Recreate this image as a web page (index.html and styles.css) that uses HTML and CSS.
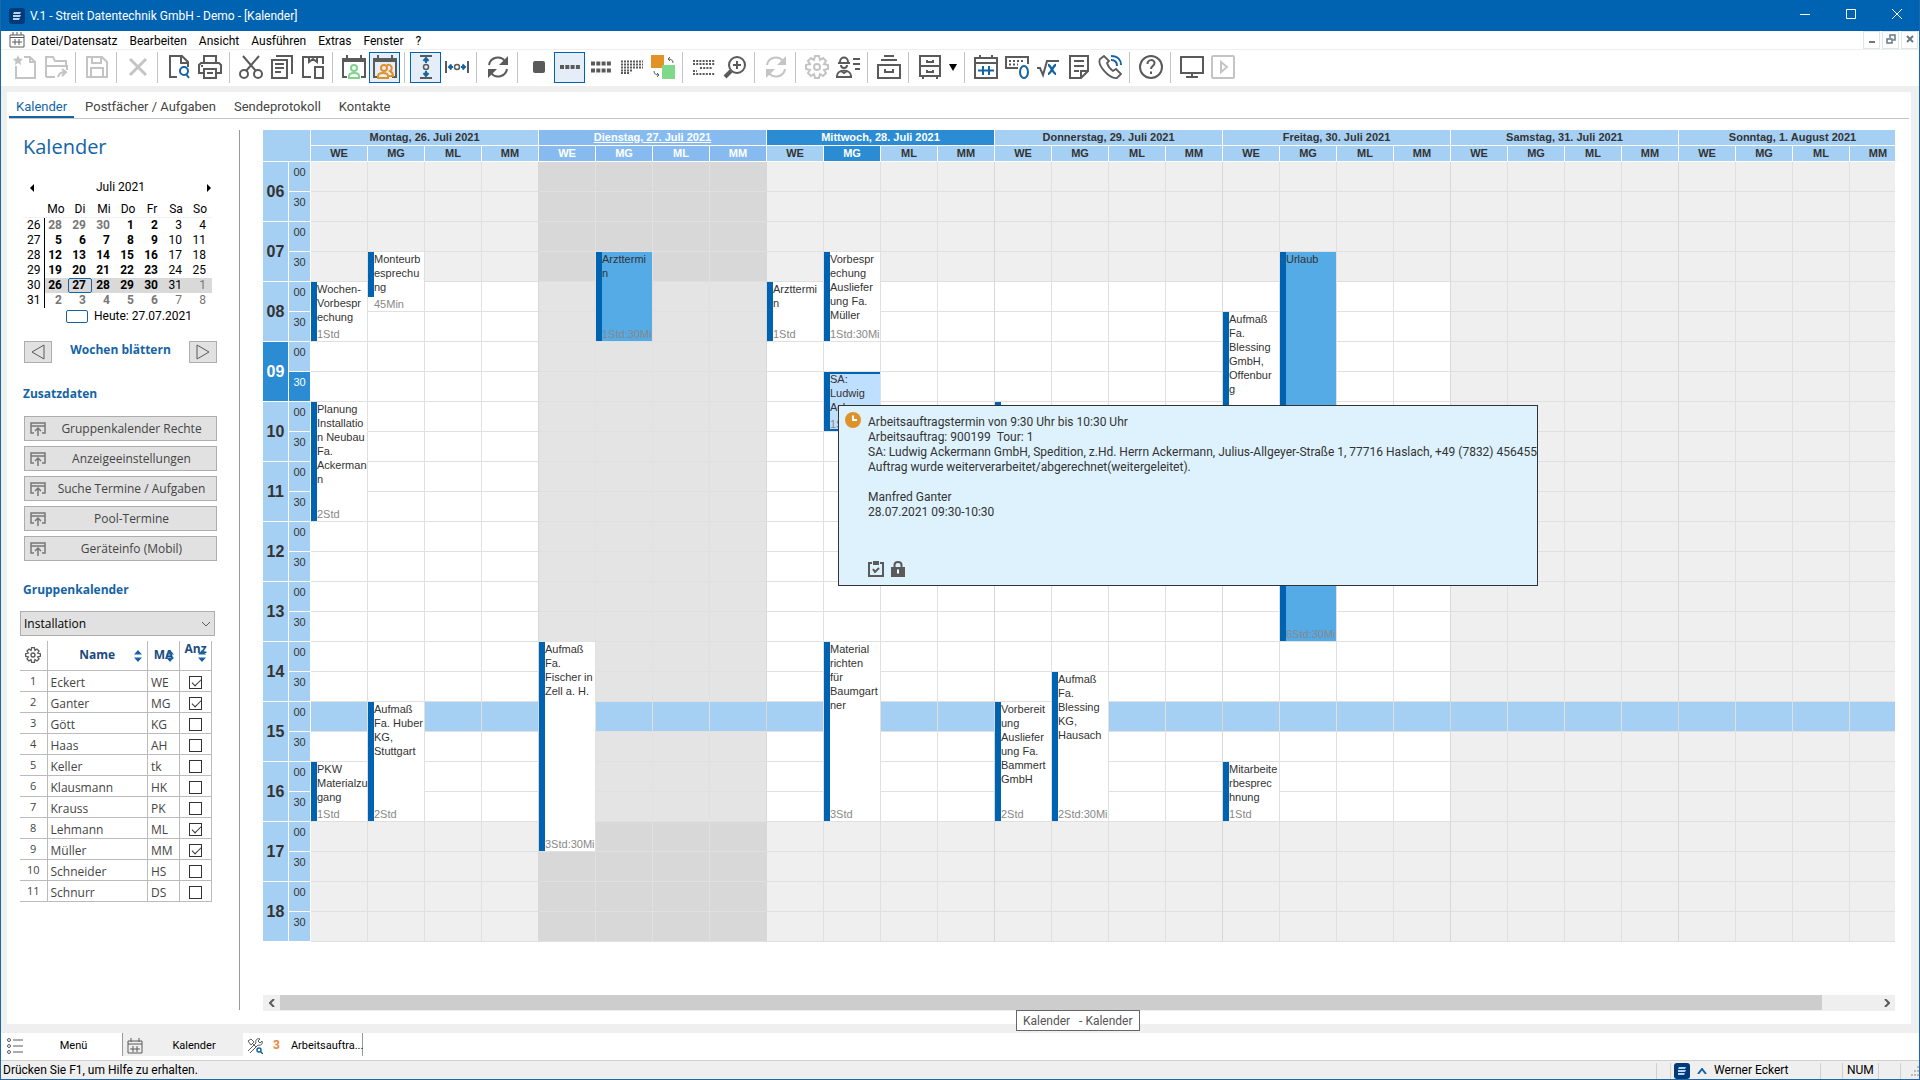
FILE: index.html
```html
<!DOCTYPE html>
<html lang="de">
<head>
  <meta charset="UTF-8" />
  <title>V.1 - Streit Datentechnik GmbH - Demo - [Kalender]</title>
  <link rel="stylesheet" href="styles.css">
</head>
<body>

  <header class="titlebar">
    <svg class="logo" viewBox="0 0 16 16"><rect width="16" height="16" rx="3" fill="#003a78"/><path d="M5 4h7l-1 2H4zM4 7h8l-1 2H4zM4 10h7l-1 2H4z" fill="#b9d3ee"/></svg>
    <span class="title">V.1 - Streit Datentechnik GmbH - Demo - [Kalender]</span>
    <div class="window-buttons">
      <button aria-label="Minimieren"><svg viewBox="0 0 10 10"><path d="M0 5.500h10"/></svg></button>
      <button aria-label="Maximieren"><svg viewBox="0 0 10 10"><path d="M.5.5h9v9h-9z"/></svg></button>
      <button aria-label="Schließen"><svg viewBox="0 0 10 10"><path d="M0 0l10 10M10 0L0 10"/></svg></button>
    </div>
  </header>

  <nav class="menubar">
    <svg class="menu-icon" viewBox="0 0 16 16"><path d="M1 3h14v12H1zM1 5.500h14M4 0v3M8 0v3M12 0v3M6 7v6M10 7v6M3 10h10"/></svg>
    <a href="#">Datei/Datensatz</a>
    <a href="#">Bearbeiten</a>
    <a href="#">Ansicht</a>
    <a href="#">Ausführen</a>
    <a href="#">Extras</a>
    <a href="#">Fenster</a>
    <a href="#">?</a>
    <div class="mdi-buttons">
      <button aria-label="Minimieren"><svg viewBox="0 0 10 10"><path d="M2 8h6"/></svg></button>
      <button aria-label="Wiederherstellen"><svg viewBox="0 0 10 10"><path d="M1 5h5v4H1zM4 4V1h5v5H7" stroke-width="1.500"/></svg></button>
      <button aria-label="Schließen"><svg viewBox="0 0 10 10"><path d="M2 2l6 6M8 2L2 8"/></svg></button>
    </div>
  </nav>

  <div class="toolbar">
    <button class="off" aria-label="Neu"><svg viewBox="0 0 24 24"><path d="M11 2h6l5 5v16H3V11M17 2v5h5"/><path d="M5 0l1.500 3.500L10 4 7.500 6.500 8 10 5 8 2 10l.5-3.500L0 4l3.500-.5z" fill="#c4c4c4" stroke="none"/></svg></button>
    <button class="off" aria-label="Öffnen"><svg viewBox="0 0 24 24"><path d="M2 22V2h7l2 4h11v4M2 22V11h21v4M2 22h9M14 22c1-4 4-5 7-5M18 14l4 3-4 4"/></svg></button>
    <i></i>
    <button class="off" aria-label="Speichern"><svg viewBox="0 0 24 24"><path d="M2 2h15l5 5v15H2zM7 2v6h9V2M6 22v-9h12v9"/></svg></button>
    <i></i>
    <button class="off" aria-label="Löschen"><svg viewBox="0 0 24 24"><path d="M4 4l16 16M20 4L4 20" stroke-width="3"/></svg></button>
    <i></i>
    <button aria-label="Vorschau"><svg viewBox="0 0 24 24"><path d="M10 22H3V1h12l6 6v5M14 1v7h7"/><g stroke="#1464a5"><circle cx="17" cy="16" r="4"/><path d="M19 19l3 4"/></g></svg></button>
    <button aria-label="Drucken"><svg viewBox="0 0 24 24"><path d="M6 8V1h12v7M6 18H1V10l2-2h18l2 2v8h-5M6 14h12v9H6zM3 11h2M9 18h6"/></svg></button>
    <i></i>
    <button aria-label="Ausschneiden"><svg viewBox="0 0 24 24"><circle cx="5" cy="19" r="4"/><circle cx="19" cy="19" r="4"/><path d="M4 1l13 15M20 1L7 16"/></svg></button>
    <button aria-label="Kopieren"><svg viewBox="0 0 24 24"><path d="M2 5h15v18H2zM6 1h16v18M5 9h9M5 13h9M5 17h6"/></svg></button>
    <button aria-label="Einfügen"><svg viewBox="0 0 24 24"><path d="M10 22H2V2h20v7M8 1v6l4-3 4 3V1M14 12h8v11h-8z"/></svg></button>
    <i></i>
    <button aria-label="Einzelkalender"><svg viewBox="0 0 24 24"><path d="M0 5h24" stroke-width="4"/><path d="M5 0v4M19 0v4M1 4v18h4M19 22h4V4"/><g stroke="#7fd18c"><circle cx="12" cy="13" r="3"/><path d="M7 23v-2c0-4 10-4 10 0v2z"/></g></svg></button>
    <button class="on" aria-label="Gruppenkalender"><svg viewBox="0 0 24 24"><path d="M0 5h24" stroke-width="4"/><path d="M5 0v4M19 0v4M1 4v18h4M19 22h4V4"/><g stroke="#e0922a"><circle cx="11" cy="13" r="3"/><path d="M5 23v-2c0-4 10-4 10 0v2zM14 10c5-1 6 4 3 6 2 1 3 2 3 5h-4"/></g></svg></button>
    <i></i>
    <button class="on" aria-label="Höhe anpassen"><svg viewBox="0 0 24 24"><path d="M6 1h12M6 23h12"/><circle cx="12" cy="12" r="2.500" stroke-width="1.500"/><path d="M12 8V3M9.500 6L12 3l2.500 3M12 16v5M9.500 18l2.500 3 2.500-3" stroke="#1464a5"/></svg></button>
    <button aria-label="Breite anpassen"><svg viewBox="0 0 24 24"><path d="M1 6v12M23 6v12"/><circle cx="12" cy="12" r="2.500" stroke-width="1.500"/><path d="M8 12H4M6.500 9.500L4 12l2.500 2.500M16 12h4M17.500 9.500L20 12l-2.500 2.500" stroke="#1464a5"/></svg></button>
    <i></i>
    <button aria-label="Aktualisieren"><svg viewBox="0 0 24 24"><path d="M3 10a9 9 0 0 1 16-4M21 14a9 9 0 0 1-16 4"/><path d="M22 1v9h-9zM2 23v-9h9z" fill="#5a5a5a" stroke="none"/></svg></button>
    <i></i>
    <button aria-label="Tag"><svg viewBox="0 0 24 24"><rect x="6" y="6" width="12" height="12" rx="2" fill="#5a5a5a" stroke="none"/></svg></button>
    <button class="on" aria-label="Woche"><svg viewBox="0 0 24 24"><path d="M2 12h20" stroke-width="4" stroke-dasharray="4 1.300"/></svg></button>
    <button aria-label="Zwei Wochen"><svg viewBox="0 0 24 24"><path d="M2 8.500h20M2 15.500h20" stroke-width="4" stroke-dasharray="4 1.300"/></svg></button>
    <button aria-label="Monat"><svg viewBox="0 0 24 24"><path d="M1 6.500h22M1 9.500h22M1 12.500h22M1 15.500h11M1 18h8" stroke-dasharray="2 1"/></svg></button>
    <button aria-label="Farben tauschen"><svg viewBox="0 0 24 24"><path d="M0 0h13v13H0z" fill="#e39225" stroke="none"/><path d="M11 10h13v14H11z" fill="#7fd98a" stroke="none"/><path d="M22 8c0-3-2-4-5-4M19 2l-2 2 2 2M3 16c0 3 2 4 5 4M6 18l2 2-2 2" stroke-width="1"/></svg></button>
    <i></i>
    <button aria-label="Zeitleiste"><svg viewBox="0 0 24 24"><path d="M1 6h22M1 9h22M8 13h12M1 16h4M1 19h22" stroke-dasharray="2 1.200"/></svg></button>
    <button aria-label="Zoom"><svg viewBox="0 0 24 24"><circle cx="14" cy="10" r="8"/><path d="M14 6v8M10 10h8"/><path d="M8 16l-6 6" stroke-width="4"/></svg></button>
    <i></i>
    <button class="off" aria-label="Synchronisieren"><svg viewBox="0 0 24 24"><path d="M3 10a9 9 0 0 1 16-4M21 14a9 9 0 0 1-16 4"/><path d="M22 1v9h-9zM2 23v-9h9z" fill="#c4c4c4" stroke="none"/></svg></button>
    <i></i>
    <button class="off" aria-label="Einstellungen"><svg viewBox="0 0 24 24"><path d="M10 1h4l1 4 3-2 3 3-2 3 4 1v4l-4 1 2 3-3 3-3-2-1 4h-4l-1-4-3 2-3-3 2-3-4-1v-4l4-1-2-3 3-3 3 2z"/><circle cx="12" cy="12" r="3"/></svg></button>
    <button aria-label="Mitarbeiter"><svg viewBox="0 0 24 24"><path d="M2 8h12M4 7c0-6 8-6 8 0M5 10c0 4 6 4 6 0M1 21c0-7 14-7 14 0v1H1zM5 16l3 2 3-2M17 4h7M17 9h7M19 14h5"/></svg></button>
    <i></i>
    <button aria-label="Archiv"><svg viewBox="0 0 24 24"><path d="M7 1h10M4 5h16M1 10h22v13H1zM8 14v3h8v-3"/></svg></button>
    <i></i>
    <button aria-label="Ablage"><svg viewBox="0 0 24 24"><path d="M2 1h20v20H2zM2 11h20M9 5v2h6V5M9 15v2h6v-2M5 21v3M19 21v3"/></svg></button>
    <button class="arrow" aria-label="Mehr"><svg viewBox="0 0 8 8"><path d="M0 1h8L4 8z"/></svg></button>
    <i></i>
    <button aria-label="Kalender"><svg viewBox="0 0 24 24"><path d="M1 3h22v20H1zM1 8h22M6 0v4M18 0v4"/><path d="M9 11v9M15 11v9M4 15.500h16" stroke="#1464a5"/></svg></button>
    <button aria-label="Nummernblock"><svg viewBox="0 0 24 24"><path d="M13 13H1V2h22v7"/><path d="M4 6h16M4 9.500h9" stroke-dasharray="2 2"/><ellipse cx="19" cy="17" rx="4" ry="6" stroke="#1464a5"/></svg></button>
    <button aria-label="Formel"><svg viewBox="0 0 24 24"><path d="M1 13h3l3 7L11 6h12"/><path d="M12 10c3 0 5 9 8 9M20 10c-3 0-5 9-8 9" stroke="#1464a5" stroke-width="2.500"/></svg></button>
    <button aria-label="Notiz"><svg viewBox="0 0 24 24"><path d="M14 23H3V1h18v15zM14 23v-7h7M7 6h10M7 11h10M7 16h5"/></svg></button>
    <button aria-label="Telefon"><svg viewBox="0 0 24 24"><path d="M6 1L2 4c-3 6 9 20 17 19l4-4-5-5-3 2c-3-2-5-5-6-8l2-2z" stroke-width="1.800"/><path d="M13 5c4 0 6 2 6 6M13 1c7 0 10 4 10 9" stroke="#1464a5"/></svg></button>
    <i></i>
    <button aria-label="Hilfe"><svg viewBox="0 0 24 24"><circle cx="12" cy="12" r="11"/><path d="M8.500 9c0-5 7-5 7-1 0 3-3.500 3-3.500 6M12 16.500v2.500"/></svg></button>
    <i></i>
    <button aria-label="Bildschirm"><svg viewBox="0 0 24 24"><path d="M1 2h22v16H1zM12 18v4M6 22h12"/></svg></button>
    <button class="off" aria-label="Abspielen"><svg viewBox="0 0 24 24"><rect x="1" y="1" width="22" height="22" rx="1"/><path d="M10 7l6 5-6 5z"/></svg></button>
  </div>

  <main class="panel">
    <nav class="tabs">
      <a href="#" class="active">Kalender</a>
      <a href="#">Postfächer / Aufgaben</a>
      <a href="#">Sendeprotokoll</a>
      <a href="#">Kontakte</a>
    </nav>

    <div class="content">
      <aside class="sidebar">
        <h1>Kalender</h1>

        <div class="month-nav">
          <button aria-label="Vorheriger Monat"><svg viewBox="0 0 4 8"><path d="M4 0v8L0 4z"/></svg></button>
          <span>Juli 2021</span>
          <button aria-label="Nächster Monat"><svg viewBox="0 0 4 8"><path d="M0 0v8l4-4z"/></svg></button>
        </div>
        <table class="month">
          <thead>
            <tr><th></th><th>Mo</th><th>Di</th><th>Mi</th><th>Do</th><th>Fr</th><th>Sa</th><th>So</th></tr>
          </thead>
          <tbody>
            <tr><th>26</th><td class="out">28</td><td class="out">29</td><td class="out">30</td><td>1</td><td>2</td><td>3</td><td>4</td></tr>
            <tr><th>27</th><td>5</td><td>6</td><td>7</td><td>8</td><td>9</td><td>10</td><td>11</td></tr>
            <tr><th>28</th><td>12</td><td>13</td><td>14</td><td>15</td><td>16</td><td>17</td><td>18</td></tr>
            <tr><th>29</th><td>19</td><td>20</td><td>21</td><td>22</td><td>23</td><td>24</td><td>25</td></tr>
            <tr class="current"><th>30</th><td>26</td><td class="today">27</td><td>28</td><td>29</td><td>30</td><td>31</td><td class="out">1</td></tr>
            <tr><th>31</th><td class="out">2</td><td class="out">3</td><td class="out">4</td><td class="out">5</td><td class="out">6</td><td class="out">7</td><td class="out">8</td></tr>
          </tbody>
        </table>
        <div class="today-line"><span class="today-box"></span>Heute: 27.07.2021</div>

        <div class="weeks">
          <button aria-label="Woche zurück"><svg viewBox="0 0 14 16"><path d="M13 1v14L1 8z"/></svg></button>
          <h2>Wochen blättern</h2>
          <button aria-label="Woche vor"><svg viewBox="0 0 14 16"><path d="M1 1v14l12-7z"/></svg></button>
        </div>

        <h2>Zusatzdaten</h2>
        <div class="extras">
          <button><svg viewBox="0 0 16 14"><path d="M4 11H1V1h14v10h-3M1 4h14M8 14V6M5 9l3-3 3 3"/></svg><span>Gruppenkalender Rechte</span></button>
          <button><svg viewBox="0 0 16 14"><path d="M4 11H1V1h14v10h-3M1 4h14M8 14V6M5 9l3-3 3 3"/></svg><span>Anzeigeeinstellungen</span></button>
          <button><svg viewBox="0 0 16 14"><path d="M4 11H1V1h14v10h-3M1 4h14M8 14V6M5 9l3-3 3 3"/></svg><span>Suche Termine / Aufgaben</span></button>
          <button><svg viewBox="0 0 16 14"><path d="M4 11H1V1h14v10h-3M1 4h14M8 14V6M5 9l3-3 3 3"/></svg><span>Pool-Termine</span></button>
          <button><svg viewBox="0 0 16 14"><path d="M4 11H1V1h14v10h-3M1 4h14M8 14V6M5 9l3-3 3 3"/></svg><span>Geräteinfo (Mobil)</span></button>
        </div>

        <h2><label for="group">Gruppenkalender</label></h2>
        <div class="group-select">
          <select id="group">
            <option selected>Installation</option>
            <option>Verwaltung</option>
          </select>
          <svg viewBox="0 0 10 6"><path d="M1 1l4 4 4-4"/></svg>
        </div>

        <table class="members">
          <thead>
            <tr>
              <th><svg class="gear" viewBox="0 0 24 24"><path d="M10 1h4l1 4 3-2 3 3-2 3 4 1v4l-4 1 2 3-3 3-3-2-1 4h-4l-1-4-3 2-3-3 2-3-4-1v-4l4-1-2-3 3-3 3 2z"/><circle cx="12" cy="12" r="3"/></svg></th>
              <th>Name<svg class="sort" viewBox="0 0 8 12"><path d="M0 4.500L4 0l4 4.500zM0 7.500L4 12l4-4.500z"/></svg></th>
              <th>MA<svg class="sort" viewBox="0 0 8 12"><path d="M0 4.500L4 0l4 4.500zM0 7.500L4 12l4-4.500z"/></svg></th>
              <th class="high">Anz<svg class="sort" viewBox="0 0 8 12"><path d="M0 4.500L4 0l4 4.500zM0 7.500L4 12l4-4.500z"/></svg></th>
            </tr>
          </thead>
          <tbody>
            <tr><td>1</td><td>Eckert</td><td>WE</td><td><input type="checkbox" aria-label="Eckert" checked></td></tr>
            <tr><td>2</td><td>Ganter</td><td>MG</td><td><input type="checkbox" aria-label="Ganter" checked></td></tr>
            <tr><td>3</td><td>Gött</td><td>KG</td><td><input type="checkbox" aria-label="Gött"></td></tr>
            <tr><td>4</td><td>Haas</td><td>AH</td><td><input type="checkbox" aria-label="Haas"></td></tr>
            <tr><td>5</td><td>Keller</td><td>tk</td><td><input type="checkbox" aria-label="Keller"></td></tr>
            <tr><td>6</td><td>Klausmann</td><td>HK</td><td><input type="checkbox" aria-label="Klausmann"></td></tr>
            <tr><td>7</td><td>Krauss</td><td>PK</td><td><input type="checkbox" aria-label="Krauss"></td></tr>
            <tr><td>8</td><td>Lehmann</td><td>ML</td><td><input type="checkbox" aria-label="Lehmann" checked></td></tr>
            <tr><td>9</td><td>Müller</td><td>MM</td><td><input type="checkbox" aria-label="Müller" checked></td></tr>
            <tr><td>10</td><td>Schneider</td><td>HS</td><td><input type="checkbox" aria-label="Schneider"></td></tr>
            <tr><td>11</td><td>Schnurr</td><td>DS</td><td><input type="checkbox" aria-label="Schnurr"></td></tr>
          </tbody>
        </table>
      </aside>

      <section class="calendar">
        <div class="sheet">
          <div class="times">
            <div class="corner"></div>
            <div class="hour"><b>06</b><span>00</span><span>30</span></div>
            <div class="hour"><b>07</b><span>00</span><span>30</span></div>
            <div class="hour"><b>08</b><span>00</span><span>30</span></div>
            <div class="hour now"><b>09</b><span>00</span><span>30</span></div>
            <div class="hour"><b>10</b><span>00</span><span>30</span></div>
            <div class="hour"><b>11</b><span>00</span><span>30</span></div>
            <div class="hour"><b>12</b><span>00</span><span>30</span></div>
            <div class="hour"><b>13</b><span>00</span><span>30</span></div>
            <div class="hour"><b>14</b><span>00</span><span>30</span></div>
            <div class="hour"><b>15</b><span>00</span><span>30</span></div>
            <div class="hour"><b>16</b><span>00</span><span>30</span></div>
            <div class="hour"><b>17</b><span>00</span><span>30</span></div>
            <div class="hour"><b>18</b><span>00</span><span>30</span></div>
          </div>

          <!-- --from = half-hour slot (1 = 06:00), --slots = length in half hours -->
          <div class="day">
            <h3>Montag, 26. Juli 2021</h3>
            <h4>WE</h4><h4>MG</h4><h4>ML</h4><h4>MM</h4>
            <div class="col">
              <div class="event" style="--from:5;--slots:2">Wochen-<br>Vorbespr<br>echung<small>1Std</small></div>
              <div class="event" style="--from:9;--slots:4">Planung<br>Installatio<br>n Neubau<br>Fa.<br>Ackerman<br>n<small>2Std</small></div>
              <div class="event" style="--from:21;--slots:2">PKW<br>Materialzu<br>gang<small>1Std</small></div>
            </div>
            <div class="col">
              <div class="event short" style="--from:4;--slots:2">Monteurb<br>esprechu<br>ng<small>45Min</small></div>
              <div class="event" style="--from:19;--slots:4">Aufmaß<br>Fa. Huber<br>KG,<br>Stuttgart<small>2Std</small></div>
            </div>
            <div class="col"></div>
            <div class="col"></div>
          </div>

          <div class="day is-today">
            <h3>Dienstag, 27. Juli 2021</h3>
            <h4>WE</h4><h4>MG</h4><h4>ML</h4><h4>MM</h4>
            <div class="col">
              <div class="event" style="--from:17;--slots:7">Aufmaß<br>Fa.<br>Fischer in<br>Zell a. H.<small>3Std:30Mi</small></div>
            </div>
            <div class="col">
              <div class="event absent" style="--from:4;--slots:3">Arzttermi<br>n<small>1Std:30Mi</small></div>
            </div>
            <div class="col"></div>
            <div class="col"></div>
          </div>

          <div class="day selected">
            <h3>Mittwoch, 28. Juli 2021</h3>
            <h4>WE</h4><h4 class="picked">MG</h4><h4>ML</h4><h4>MM</h4>
            <div class="col">
              <div class="event" style="--from:5;--slots:2">Arzttermi<br>n<small>1Std</small></div>
            </div>
            <div class="col">
              <div class="event" style="--from:4;--slots:3">Vorbespr<br>echung<br>Ausliefer<br>ung Fa.<br>Müller<small>1Std:30Mi</small></div>
              <div class="event order" style="--from:8;--slots:2">SA:<br>Ludwig<br>Acker<small>1Std</small></div>
              <div class="event" style="--from:17;--slots:6">Material<br>richten<br>für<br>Baumgart<br>ner<small>3Std</small></div>
            </div>
            <div class="col"></div>
            <div class="col"></div>
          </div>

          <div class="day">
            <h3>Donnerstag, 29. Juli 2021</h3>
            <h4>WE</h4><h4>MG</h4><h4>ML</h4><h4>MM</h4>
            <div class="col">
              <div class="event" style="--from:9;--slots:2"></div>
              <div class="event" style="--from:19;--slots:4">Vorbereit<br>ung<br>Ausliefer<br>ung Fa.<br>Bammert<br>GmbH<small>2Std</small></div>
            </div>
            <div class="col">
              <div class="event" style="--from:18;--slots:5">Aufmaß<br>Fa.<br>Blessing<br>KG,<br>Hausach<small>2Std:30Mi</small></div>
            </div>
            <div class="col"></div>
            <div class="col"></div>
          </div>

          <div class="day">
            <h3>Freitag, 30. Juli 2021</h3>
            <h4>WE</h4><h4>MG</h4><h4>ML</h4><h4>MM</h4>
            <div class="col">
              <div class="event" style="--from:6;--slots:4">Aufmaß<br>Fa.<br>Blessing<br>GmbH,<br>Offenbur<br>g</div>
              <div class="event" style="--from:21;--slots:2">Mitarbeite<br>rbesprec<br>hnung<small>1Std</small></div>
            </div>
            <div class="col">
              <div class="event absent" style="--from:4;--slots:13">Urlaub<small>6Std:30Mi</small></div>
            </div>
            <div class="col"></div>
            <div class="col"></div>
          </div>

          <div class="day weekend">
            <h3>Samstag, 31. Juli 2021</h3>
            <h4>WE</h4><h4>MG</h4><h4>ML</h4><h4>MM</h4>
            <div class="col"></div><div class="col"></div><div class="col"></div><div class="col"></div>
          </div>

          <div class="day weekend">
            <h3>Sonntag, 1. August 2021</h3>
            <h4>WE</h4><h4>MG</h4><h4>ML</h4><h4>MM</h4>
            <div class="col"></div><div class="col"></div><div class="col"></div><div class="col"></div>
          </div>
        </div>

        <div class="scrollbar">
          <button aria-label="Nach links"><svg viewBox="0 0 6 8"><path d="M5 0L1 4l4 4"/></svg></button>
          <div class="track"><div class="thumb"></div></div>
          <button aria-label="Nach rechts"><svg viewBox="0 0 6 8"><path d="M1 0l4 4-4 4"/></svg></button>
        </div>

        <div class="tooltip">
          <svg class="clock" viewBox="0 0 16 16"><circle cx="8" cy="8" r="8" fill="#e0922a"/><path d="M8 3.500V8h4" fill="none" stroke="#fff" stroke-width="2"/></svg>
          <div>
            <p>Arbeitsauftragstermin von 9:30 Uhr bis 10:30 Uhr</p>
            <p>Arbeitsauftrag: 900199 &nbsp;Tour: 1</p>
            <p>SA: Ludwig Ackermann GmbH, Spedition, z.Hd. Herrn Ackermann, Julius-Allgeyer-Straße 1, 77716 Haslach, +49 (7832) 456455</p>
            <p>Auftrag wurde weiterverarbeitet/abgerechnet(weitergeleitet).</p>
            <p class="person">Manfred Ganter</p>
            <p>28.07.2021 09:30-10:30</p>
            <div class="flags">
              <svg viewBox="0 0 16 16"><path d="M4 2H1v13h14V2h-3M5 8l2 3 4-4" fill="none" stroke="#5a5a5a" stroke-width="2"/><path d="M5 0h6v4H5z" fill="#5a5a5a"/></svg>
              <svg viewBox="0 0 16 16"><path d="M1 6h14v10H1z" fill="#5a5a5a"/><path d="M4.500 6V4c0-4 7-4 7 0v2" fill="none" stroke="#5a5a5a" stroke-width="2"/><path d="M8 8.500v4" stroke="#fff" stroke-width="2"/></svg>
            </div>
          </div>
        </div>
      </section>
    </div>
  </main>

  <div class="tab-hint">Kalender &nbsp; - Kalender</div>

  <nav class="windows">
    <button class="first">
      <svg viewBox="0 0 16 16"><circle cx="2" cy="2" r="1.500"/><circle cx="2" cy="8" r="1.500"/><circle cx="2" cy="14" r="1.500"/><path d="M6 2h10M6 8h10M6 14h10"/></svg>
      <span>Menü</span>
    </button>
    <button class="active">
      <svg viewBox="0 0 16 16"><path d="M1 3h14v12H1zM1 6h14M4 0v4M12 0v4M6 8v6M10 8v6M3 11h10"/></svg>
      <span>Kalender</span>
    </button>
    <button class="last">
      <svg viewBox="0 0 16 16"><path d="M1 13l8-8M3 15l8-8M9 5c-1-3 1-5 4-4l-2 2 2 2 2-2c1 3-1 5-4 4M1 3l3-2 3 3-3 3zM6 6l3 3"/><g stroke="#1464a5" stroke-width="1.500"><circle cx="12" cy="12" r="2"/><path d="M13 13l3 3"/></g></svg>
      <em>3</em>
      <span>Arbeitsauftra...</span>
    </button>
  </nav>

  <footer class="statusbar">
    <span class="hint">Drücken Sie F1, um Hilfe zu erhalten.</span>
    <span class="cell gap"></span>
    <span class="cell user">
      <svg class="logo" viewBox="0 0 16 16"><rect width="16" height="16" rx="3" fill="#003a78"/><path d="M5 4h7l-1 2H4zM4 7h8l-1 2H4zM4 10h7l-1 2H4z" fill="#b9d3ee"/></svg>
      <svg class="up" viewBox="0 0 10 6"><path d="M1 6l4-5 4 5"/></svg>
      Werner Eckert
    </span>
    <span class="cell caps"></span>
    <span class="cell num">NUM</span>
    <span class="cell caps"></span>
    <span class="cell grip"><svg viewBox="0 0 10 10"><path d="M8 1h2M5 5h2M8 5h2M2 9h2M5 9h2M8 9h2"/></svg></span>
  </footer>

</body>
</html>
```

FILE: styles.css
```css
* {
  box-sizing: border-box;
}

body {
  margin: 0;
  min-height: 100vh;
  display: flex;
  flex-direction: column;
  position: relative;
  border: 1px solid #1d66a8;
  border-top: none;
  background: #efefef;
  color: #000;
  font-family: Roboto, "Open Sans", sans-serif;
  font-size: 12px;
  line-height: 15px;
}

button {
  padding: 0;
  border: none;
  background: none;
  color: inherit;
  font: inherit;
}

a {
  color: inherit;
  text-decoration: none;
}

svg {
  flex: none;
  fill: none;
  stroke: #5a5a5a;
}

h1, h2, h3, h4, p {
  margin: 0;
}

.logo {
  width: 16px;
  height: 16px;
  stroke: none;
}

/* title bar */
.titlebar {
  display: flex;
  align-items: center;
  height: 31px;
  margin: 0 -1px;
  padding-left: 9px;
  background: #0063b1;
  color: #fff;
}

.title {
  margin-left: 5px;
  padding-top: 2px;
}

.window-buttons {
  display: flex;
  margin-left: auto;
}

.window-buttons button {
  width: 46px;
  height: 31px;
}

.window-buttons svg {
  width: 10px;
  height: 10px;
  stroke: #fff;
}

/* menu */
.menubar {
  display: flex;
  align-items: center;
  gap: 12px;
  height: 19px;
  padding-left: 8px;
  background: #fff;
  border-bottom: 1px solid #efefef;
}

.menubar a {
  padding-top: 2px;
}

.menu-icon {
  width: 16px;
  height: 16px;
  margin-right: -6px;
}

.mdi-buttons {
  display: flex;
  gap: 2px;
  margin: 0 1px 0 auto;
}

.mdi-buttons button {
  width: 17px;
  height: 18px;
  border: 1px solid #dfe6ea;
}

.mdi-buttons svg {
  width: 10px;
  height: 10px;
  stroke: #667a84;
  stroke-width: 2;
}

/* toolbar */
.toolbar {
  display: flex;
  align-items: center;
  height: 36px;
  padding: 0 0 2px 8px;
  background: #fff;
}

.toolbar button {
  display: flex;
  align-items: center;
  justify-content: center;
  width: 31px;
  height: 31px;
}

.toolbar .on {
  background: #e5eef8;
  border: 1px solid #0063b1;
}

.toolbar svg {
  width: 24px;
  height: 24px;
  stroke-width: 2;
}

.toolbar .off svg {
  stroke: #c4c4c4;
}

.toolbar i {
  width: 1px;
  height: 31px;
  margin: 0 5px 0 4px;
  background: #c4c4c4;
}

.toolbar .arrow {
  width: 15px;
}

.toolbar .arrow svg {
  width: 8px;
  height: 8px;
  fill: #000;
  stroke: none;
}

/* main panel */
.panel {
  flex: 1;
  display: flex;
  flex-direction: column;
  margin: 6px 8px 9px 6px;
  background: #fff;
}

.tabs {
  display: flex;
  gap: 4px;
  margin: 0 2px;
  border-bottom: 1px solid #c4c4c4;
  color: #444;
  font-size: 13px;
}

.tabs a {
  height: 26px;
  padding: 0 7px;
  line-height: 29px;
}

.tabs .active {
  color: #1464a5;
  border-bottom: 2px solid #1464a5;
}

.content {
  flex: 1;
  display: flex;
}

/* sidebar */
.sidebar {
  width: 233px;
  margin: 11px 0 14px;
  padding: 0 21px 0 16px;
  border-right: 1px solid #999;
}

h1 {
  margin-bottom: 16px;
  color: #1464a5;
  font-family: "Open Sans", sans-serif;
  font-size: 20px;
  font-weight: normal;
  line-height: 34px;
}

h2 {
  color: #1464a5;
  font-family: "Open Sans", sans-serif;
  font-size: 12px;
  line-height: 18px;
}

.month-nav {
  display: flex;
  justify-content: space-between;
  padding: 0 7px;
  margin-bottom: 7px;
}

.month-nav svg {
  display: block;
  width: 4px;
  height: 8px;
  fill: #000;
  stroke: none;
}

.month {
  border-collapse: collapse;
}

.month th, .month td {
  width: 24px;
  height: 15px;
  padding: 0 6px 0 0;
  line-height: 15px;
  text-align: right;
}

.month th {
  font-weight: normal;
}

.month thead th {
  padding: 0;
  text-align: center;
  border-bottom: 1px solid #f2f2f2;
}

.month tr th:first-child {
  width: 21px;
}

.month tbody th {
  padding-right: 3px;
  border-right: 1px solid #000;
}

.month td {
  font-weight: bold;
}

.month td:nth-child(n+7) {
  font-weight: normal;
}

.month .out {
  color: #777;
}

.current td {
  background: #d9d9d9;
}

.month .today {
  outline: 1px solid #1464a5;
  outline-offset: -1px;
  border-radius: 2px;
}

.today-line {
  display: flex;
  align-items: center;
  gap: 6px;
  margin: 1px 0 17px 43px;
}

.today-box {
  width: 22px;
  height: 13px;
  border: 1px solid #1464a5;
  border-radius: 2px;
}

.weeks {
  display: flex;
  justify-content: space-between;
  width: 193px;
  margin: 0 0 22px 1px;
}

.weeks button {
  width: 28px;
  height: 22px;
  background: #e1e1e1;
  border: 1px solid #adadad;
}

.weeks svg {
  display: block;
  width: 14px;
  height: 16px;
  margin: auto;
}

.extras {
  display: grid;
  gap: 5px;
  width: 193px;
  margin: 13px 0 20px 1px;
}

.extras button {
  display: flex;
  align-items: center;
  height: 25px;
  padding: 0 5px;
  background: #e1e1e1;
  border: 1px solid #adadad;
  color: #444;
  font-family: "Open Sans", sans-serif;
  font-size: 12px;
  white-space: nowrap;
}

.extras span {
  flex: 1;
  padding-left: 6px;
}

.extras svg {
  width: 16px;
  height: 14px;
  stroke: #777;
  stroke-width: 1.5;
}

.group-select {
  position: relative;
  width: 195px;
  margin: 12px 0 5px -3px;
}

.group-select select {
  appearance: none;
  width: 100%;
  height: 25px;
  padding: 0 3px;
  border: 1px solid #adadad;
  border-radius: 0;
  background: #e1e1e1;
  color: #000;
  font-family: "Open Sans", sans-serif;
  font-size: 12px;
}

.group-select svg {
  position: absolute;
  top: 10px;
  right: 4px;
  width: 10px;
  height: 6px;
}

.members {
  table-layout: fixed;
  width: 192px;
  margin-left: -3px;
  border-collapse: collapse;
  color: #444;
  font-family: "Open Sans", sans-serif;
  font-size: 12px;
}

.members th, .members td {
  height: 21px;
  padding: 4px 0 0 3px;
  border: 1px solid #bbb;
  line-height: 16px;
}

.members th {
  position: relative;
  height: 29px;
  padding: 0;
  border-top: none;
  color: #1b4a80;
}

.members th:nth-child(1) { width: 27px; }
.members th:nth-child(3) { width: 32px; }
.members th:nth-child(4) { width: 32px; }

.members tr > :first-child {
  border-left: none;
}

.members td:first-child {
  padding: 0;
  text-align: center;
  font-size: 11px;
}

.members td:last-child {
  padding: 0;
}

.members .high {
  padding-bottom: 12px;
}

.gear {
  display: block;
  width: 16px;
  height: 16px;
  margin: auto;
  stroke-width: 2;
}

.sort {
  position: absolute;
  top: 9px;
  right: 5px;
  width: 8px;
  height: 12px;
  fill: #1464a5;
  stroke: none;
}

.members input {
  appearance: none;
  display: block;
  position: relative;
  width: 13px;
  height: 13px;
  margin: 5px auto 2px;
  border: 1px solid #333;
}

.members input:checked::after {
  content: "";
  position: absolute;
  top: 2px;
  left: 2px;
  width: 8px;
  height: 4px;
  border: solid #333;
  border-width: 0 0 1px 1px;
  transform: rotate(-45deg);
}

/* calendar */
.calendar {
  flex: 1;
  min-width: 0;
  display: flex;
  flex-direction: column;
  position: relative;
  margin: 11px 16px 13px 23px;
  color: #333;
  font-family: "Liberation Sans", Arial, sans-serif;
  font-size: 11px;
}

.sheet {
  display: flex;
  overflow: hidden;
}

.times {
  flex: none;
  width: 48px;
}

.corner {
  height: 32px;
  background: #a6d0f3;
  border: solid #fff;
  border-width: 0 1px 1px 0;
}

.hour {
  display: grid;
  grid-template-columns: 26px 22px;
  grid-template-rows: 30px 30px;
}

.hour b, .hour span {
  background: #a6d0f3;
  border: solid #fff;
  border-width: 0 1px 1px 0;
  text-align: center;
}

.hour b {
  grid-row: span 2;
  font-size: 16px;
  line-height: 59px;
}

.hour span {
  line-height: 21px;
}

.now b, .now span:last-child {
  background: #2b8cd4;
  color: #fff;
}

.day {
  flex: none;
  display: grid;
  grid-template-columns: repeat(4, 57px);
  grid-template-rows: 16px 16px;
  --off: #efefef;
  --work: #fff;
}

.day h3, .day h4 {
  background: #a6d0f3;
  border: solid #fff;
  border-width: 0 1px 1px 0;
  font-size: 11px;
  line-height: 15px;
  text-align: center;
}

.day h3 {
  grid-column: span 4;
}

.col {
  display: grid;
  grid-template-rows: repeat(26, 30px);
  border-right: 1px solid #e0e0e0;
  background:
    repeating-linear-gradient(transparent 0 29px, #e0e0e0 29px 30px),
    linear-gradient(var(--off) 120px, var(--work) 120px 540px, #a6d0f3 540px 570px, var(--work) 570px 660px, var(--off) 660px);
}

.col:last-child {
  border-color: #d8d8d8;
}

.weekend {
  --work: #efefef;
}

.is-today {
  --off: #d8d8d8;
  --work: #e4e4e4;
}

.is-today h3, .is-today h4 {
  background: #87bbef;
  color: #fff;
}

.is-today h3 {
  text-decoration: underline;
}

.selected h3, .day .picked {
  background: #2b8cd4;
  color: #fff;
}

.event {
  grid-column: 1;
  grid-row: var(--from) / span var(--slots);
  position: relative;
  min-width: 0;
  margin-bottom: 1px;
  padding-left: 6px;
  background: linear-gradient(#0063b1, #0063b1) no-repeat 0 0 / 6px 100% #fff;
  line-height: 14px;
  white-space: nowrap;
}

.event small {
  position: absolute;
  bottom: 0;
  left: 6px;
  color: #888;
  font-size: 11px;
}

.short {
  background-size: 6px 45px;
}

.absent {
  background-color: #55abe6;
}

.order {
  background-color: #bfdfff;
  box-shadow: inset 0 2px #0063b1, inset 0 -2px #0063b1;
}

.scrollbar {
  display: flex;
  height: 16px;
  margin-top: auto;
  background: #efefef;
}

.scrollbar button {
  width: 17px;
}

.scrollbar svg {
  width: 6px;
  height: 8px;
  stroke-width: 2;
}

.track {
  flex: 1;
}

.thumb {
  width: 96.5%;
  height: 15px;
  background: #cdcdcd;
}

.tooltip {
  position: absolute;
  top: 275px;
  left: 575px;
  display: flex;
  gap: 7px;
  width: 700px;
  height: 181px;
  padding: 9px 6px;
  background: #def2fd;
  border: 1px solid #333;
  font-family: Roboto, "Open Sans", sans-serif;
  font-size: 12px;
  line-height: 15px;
  white-space: nowrap;
}

.clock {
  width: 16px;
  height: 16px;
  margin-top: -3px;
  stroke: none;
}

.person {
  margin-top: 15px;
}

.flags {
  display: flex;
  gap: 6px;
  margin-top: 41px;
}

.flags svg {
  width: 16px;
  height: 16px;
  stroke: none;
}

.tab-hint {
  position: absolute;
  left: 1015px;
  bottom: 48px;
  padding: 3px 6px 1px;
  border: 1px solid #666;
  background: #fff;
  color: #555;
}

/* window tabs */
.windows {
  display: flex;
  height: 27px;
  padding-left: 2px;
  background: #fff;
}

.windows button {
  display: flex;
  align-items: center;
  width: 120px;
  height: 23px;
  padding: 2px 4px 0;
  font-size: 11px;
}

.windows svg {
  width: 16px;
  height: 16px;
}

.windows span {
  flex: 1;
  padding-left: 6px;
}

.windows em {
  margin: 0 5px 0 10px;
  color: #e8883c;
  font-size: 12px;
  font-style: normal;
  font-weight: bold;
}

.windows .active {
  background: #efefef;
}

.first, .last {
  border-right: 1px solid #999;
}

/* status bar */
.statusbar {
  display: flex;
  align-items: center;
  height: 19px;
  padding: 1px 0 0 2px;
  border-top: 1px solid #d0d0d0;
}

.hint {
  flex: 1;
}

.cell {
  display: flex;
  align-items: center;
  height: 16px;
  border-left: 1px solid #d0d0d0;
}

.gap { width: 14px; }
.caps { width: 22px; }
.grip { width: 19px; }

.grip svg {
  width: 10px;
  height: 10px;
  margin-left: auto;
  stroke: #bbb;
  stroke-width: 2;
}

.user {
  gap: 7px;
  width: 150px;
  padding-left: 3px;
}

.up {
  width: 10px;
  height: 6px;
  stroke: #1464a5;
  stroke-width: 2;
}

.num {
  width: 36px;
  padding-left: 4px;
}
```
